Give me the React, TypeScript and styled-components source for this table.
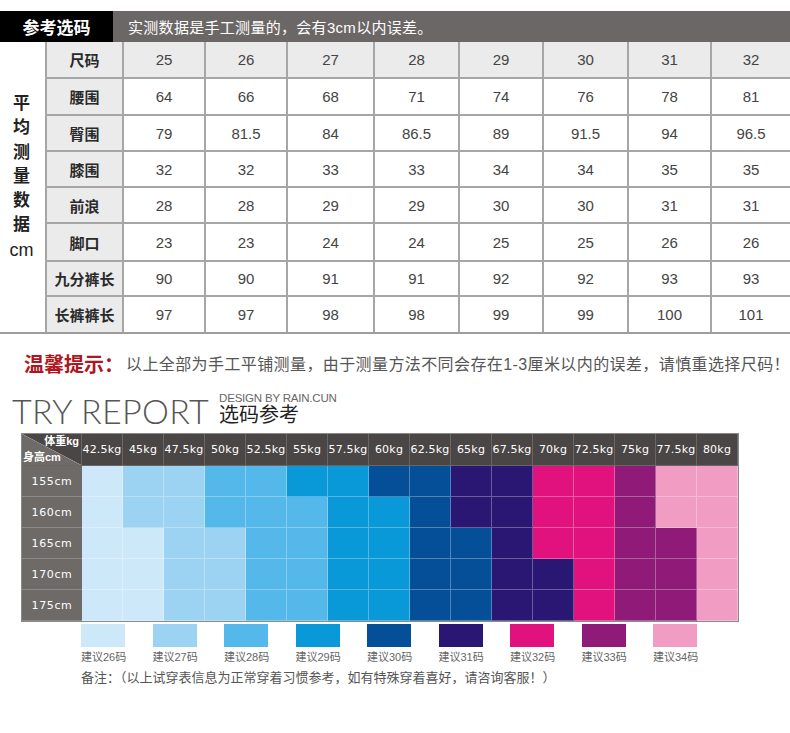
import React from "react";
import styled, { createGlobalStyle } from "styled-components";

const Global = createGlobalStyle`
  html, body { margin: 0; padding: 0; background: #fff; }
  body { font-family: "Liberation Sans", "Noto Sans CJK SC", Arial, sans-serif; }
  * { box-sizing: border-box; }
`;

const Page = styled.div`
  width: 790px;
  display: flex;
  flex-direction: column;
  font-family: "Liberation Sans", "Noto Sans CJK SC", sans-serif;
`;

const HeaderBar = styled.div`
  margin-top: 11px;
  height: 31px;
  display: flex;
`;

const BlackTag = styled.div`
  width: 113px;
  background: #000;
  color: #fff;
  font-size: 17px;
  font-weight: bold;
  display: flex;
  align-items: center;
  justify-content: center;
`;

const GrayNote = styled.div`
  flex: 1;
  background: #6b6767;
  color: #fff;
  font-size: 15px;
  letter-spacing: 0.3px;
  display: flex;
  align-items: center;
  padding-left: 15px;
`;

const SizeGrid = styled.div`
  display: grid;
  grid-template-columns: 47px 77px 82px 82px 87px 85px 84px 85px 83px 78px;
  grid-template-rows: 37px 37px 36px 36px 36px 38px 35px 35px;
  border-bottom: 2px solid #9d9d9d;
`;

const SideLabel = styled.div`
  grid-row: 1 / span 8;
  grid-column: 1;
  border-right: 2px solid #a6a6a6;
  display: flex;
  flex-direction: column;
  align-items: center;
  padding-top: 50px;
  padding-right: 2px;
  font-size: 17px;
  font-weight: bold;
  line-height: 24.3px;
  color: #222;
`;

const CmLabel = styled.span`
  font-weight: normal;
  font-size: 18px;
  color: #222;
`;

const Cell = styled.div<{ $shade?: boolean; $last?: boolean; $lastCol?: boolean; $bold?: boolean }>`
  background: ${(p) => (p.$shade ? "#ebebeb" : "#fff")};
  border-right: ${(p) => (p.$lastCol ? "none" : "2px solid #a6a6a6")};
  border-bottom: ${(p) => (p.$last ? "none" : "2px solid #a6a6a6")};
  display: flex;
  align-items: center;
  justify-content: center;
  font-size: 15px;
  font-weight: ${(p) => (p.$bold ? "bold" : "normal")};
  color: ${(p) => (p.$bold ? "#2a2a2a" : "#444")};
`;

const Tip = styled.div`
  margin-top: 18px;
  padding-left: 24px;
  height: 22px;
  display: flex;
  align-items: center;
  font-size: 16px;
  letter-spacing: 0.4px;
  color: #555;
`;

const TipLead = styled.span`
  color: #b0161e;
  font-weight: bold;
  font-size: 20px;
  letter-spacing: 0;
  margin-right: 2px;
`;

const TryHeader = styled.div`
  margin-top: 19px;
  padding-left: 12px;
  display: flex;
  align-items: flex-end;
  gap: 10px;
  height: 33px;
`;

const TryTitle = styled.div`
  font-family: "Lato", "Inter", sans-serif;
  font-weight: 300;
  font-size: 34px;
  line-height: 30px;
  color: #555;
  letter-spacing: 0.3px;
`;

const TrySub = styled.div`
  display: flex;
  flex-direction: column;
`;

const Design = styled.div`
  font-family: "Liberation Sans", sans-serif;
  font-size: 11.5px;
  line-height: 11px;
  color: #666;
  letter-spacing: -0.2px;
`;

const TryCn = styled.div`
  font-size: 20px;
  line-height: 22px;
  color: #222;
`;

const Heat = styled.div`
  margin-top: 7px;
  margin-left: 21px;
  width: 718px;
  display: grid;
  grid-template-columns: 60px repeat(16, 41px);
  grid-template-rows: 32px repeat(5, 31px);
  border: 1px solid #8a8a8a;
`;

const Corner = styled.div`
  background: linear-gradient(to top right, #6d6a68 calc(50% - 0.6px), #a09d9b 50%, #4a4646 calc(50% + 0.6px));
  display: flex;
  flex-direction: column;
  justify-content: space-between;
  color: #fff;
  font-size: 11px;
  font-weight: bold;
  line-height: 13px;
  padding: 1px 2px 1px 1px;
  border-right: 1px solid #6a6666;
  border-bottom: 1px solid #6a6666;
`;

const CornerTop = styled.span`
  align-self: flex-end;
`;

const CornerBottom = styled.span`
  align-self: flex-start;
`;

const WeightHead = styled.div`
  background: #4a4646;
  color: #fff;
  font-family: "DejaVu Sans", sans-serif;
  font-size: 11px;
  letter-spacing: 0.2px;
  display: flex;
  align-items: center;
  justify-content: center;
  border-right: 1px solid #6a6666;
  border-bottom: 1px solid #6a6666;
`;

const HeightHead = styled.div`
  background: #6d6a68;
  color: #fff;
  font-family: "DejaVu Sans", sans-serif;
  font-size: 11px;
  letter-spacing: 0.6px;
  display: flex;
  align-items: center;
  justify-content: center;
  border-bottom: 1px solid #8c8a88;
`;

const Swatch = styled.div<{ $c: string }>`
  background: ${(p) => p.$c};
  border-right: 1px solid rgba(255, 255, 255, 0.3);
  border-bottom: 1px solid rgba(255, 255, 255, 0.3);
`;

const Legend = styled.div`
  margin-left: 81px;
  margin-top: 2px;
  display: flex;
`;

const LegendItem = styled.div`
  width: 71.5px;
  display: flex;
  flex-direction: column;
  gap: 4px;
`;

const LegendBox = styled.div<{ $c: string }>`
  width: 44px;
  height: 23px;
  background: ${(p) => p.$c};
`;

const LegendText = styled.div`
  font-size: 11px;
  color: #666;
  line-height: 13px;
`;

const Note = styled.div`
  margin-top: 3px;
  margin-left: 81px;
  font-size: 13px;
  color: #555;
`;

const C: Record<number, string> = {
  26: "#cde8f8",
  27: "#9cd3f3",
  28: "#55b8ea",
  29: "#0998d8",
  30: "#054f98",
  31: "#2a1673",
  32: "#e1127d",
  33: "#8f1a78",
  34: "#f19cc3",
};

const rowsLabels = ["尺码", "腰围", "臀围", "膝围", "前浪", "脚口", "九分裤长", "长裤裤长"];
const rowsData = [
  ["25", "26", "27", "28", "29", "30", "31", "32"],
  ["64", "66", "68", "71", "74", "76", "78", "81"],
  ["79", "81.5", "84", "86.5", "89", "91.5", "94", "96.5"],
  ["32", "32", "33", "33", "34", "34", "35", "35"],
  ["28", "28", "29", "29", "30", "30", "31", "31"],
  ["23", "23", "24", "24", "25", "25", "26", "26"],
  ["90", "90", "91", "91", "92", "92", "93", "93"],
  ["97", "97", "98", "98", "99", "99", "100", "101"],
];

const weights = ["42.5kg", "45kg", "47.5kg", "50kg", "52.5kg", "55kg", "57.5kg", "60kg", "62.5kg", "65kg", "67.5kg", "70kg", "72.5kg", "75kg", "77.5kg", "80kg"];
const heights = ["155cm", "160cm", "165cm", "170cm", "175cm"];
const heat: number[][] = [
  [26, 27, 27, 28, 28, 29, 29, 30, 30, 31, 31, 32, 32, 33, 34, 34],
  [26, 27, 27, 28, 28, 28, 29, 29, 30, 31, 31, 32, 32, 33, 34, 34],
  [26, 26, 27, 27, 28, 28, 29, 29, 30, 30, 31, 32, 32, 33, 33, 34],
  [26, 26, 27, 27, 28, 28, 29, 29, 30, 30, 31, 31, 32, 33, 33, 34],
  [26, 26, 27, 27, 28, 28, 29, 29, 30, 30, 31, 31, 32, 33, 33, 34],
];

export default function App() {
  return (
    <Page>
      <Global />
      <HeaderBar>
        <BlackTag>参考选码</BlackTag>
        <GrayNote>实测数据是手工测量的，会有3cm以内误差。</GrayNote>
      </HeaderBar>
      <SizeGrid>
        <SideLabel>
          {"平均测量数据".split("").map((ch) => (
            <span key={ch}>{ch}</span>
          ))}
          <CmLabel>cm</CmLabel>
        </SideLabel>
        {rowsLabels.map((label, r) => (
          <React.Fragment key={label}>
            <Cell $shade $bold $last={r === 7}>
              {label}
            </Cell>
            {rowsData[r].map((v, c) => (
              <Cell key={c} $shade={r === 0} $last={r === 7} $lastCol={c === 7}>
                {v}
              </Cell>
            ))}
          </React.Fragment>
        ))}
      </SizeGrid>
      <Tip>
        <TipLead>温馨提示：</TipLead>
        以上全部为手工平铺测量，由于测量方法不同会存在1-3厘米以内的误差，请慎重选择尺码！
      </Tip>
      <TryHeader>
        <TryTitle>TRY REPORT</TryTitle>
        <TrySub>
          <Design>DESIGN BY RAIN.CUN</Design>
          <TryCn>选码参考</TryCn>
        </TrySub>
      </TryHeader>
      <Heat>
        <Corner>
          <CornerTop>体重kg</CornerTop>
          <CornerBottom>身高cm</CornerBottom>
        </Corner>
        {weights.map((w) => (
          <WeightHead key={w}>{w}</WeightHead>
        ))}
        {heights.map((h, r) => (
          <React.Fragment key={h}>
            <HeightHead>{h}</HeightHead>
            {heat[r].map((s, c) => (
              <Swatch key={c} $c={C[s]} />
            ))}
          </React.Fragment>
        ))}
      </Heat>
      <Legend>
        {[26, 27, 28, 29, 30, 31, 32, 33, 34].map((s) => (
          <LegendItem key={s}>
            <LegendBox $c={C[s]} />
            <LegendText>建议{s}码</LegendText>
          </LegendItem>
        ))}
      </Legend>
      <Note>备注：（以上试穿表信息为正常穿着习惯参考，如有特殊穿着喜好，请咨询客服！）</Note>
    </Page>
  );
}
